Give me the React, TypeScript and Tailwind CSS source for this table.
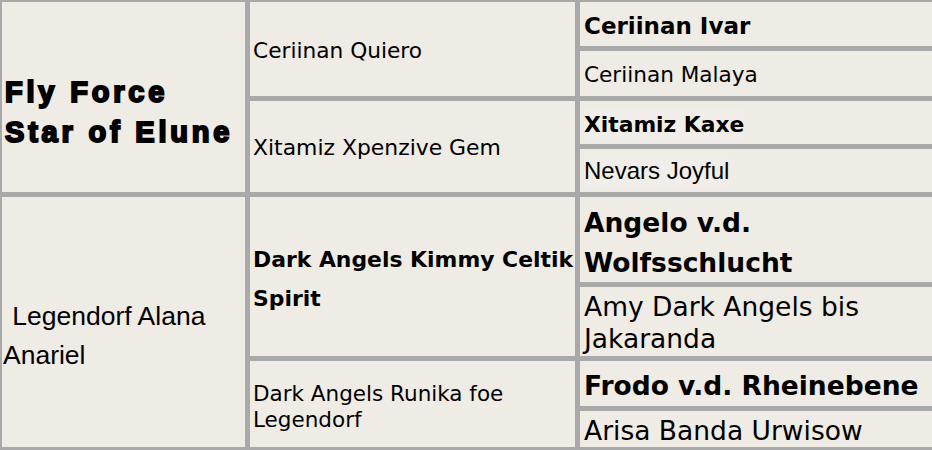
import React from "react";

const V = "font-['DejaVu_Sans',Verdana,sans-serif]";
const A = "font-['Liberation_Sans',Arial,sans-serif]";

function Cell({ className = "", children }: { className?: string; children: React.ReactNode }) {
  return (
    <div className={`bg-[#efebe5] flex flex-col justify-center text-black overflow-hidden ${className}`}>
      {children}
    </div>
  );
}

export default function App() {
  return (
    <div className="w-[932px] h-[450px] overflow-hidden bg-[#a9a9a9] pt-[2px] pl-[2px] pb-[3px]">
      <div className="grid grid-cols-[243px_325px_352px] grid-rows-[44px_45px_43px_43px_85px_69px_45px_36px] gap-[5px]">
        <Cell className="row-span-4 pl-[3px] pt-[30px]">
          <div
            className={`${A} font-bold text-[29px] leading-[40px] tracking-[3.8px] whitespace-nowrap [-webkit-text-stroke:2px_black]`}
          >
            Fly Force
            <br />
            Star of Elune
          </div>
        </Cell>
        <Cell className="row-span-2 pl-[3px] pt-[4px]">
          <div className={`${V} text-[21.7px] whitespace-nowrap`}>Ceriinan Quiero</div>
        </Cell>
        <Cell className="pl-[4px] pt-[4px]">
          <div className={`${V} font-bold text-[23px] whitespace-nowrap`}>Ceriinan Ivar</div>
        </Cell>
        <Cell className="pl-[4px] pt-[4px]">
          <div className={`${V} text-[21.6px] whitespace-nowrap`}>Ceriinan Malaya</div>
        </Cell>
        <Cell className="row-span-2 pl-[3px] pt-[3px]">
          <div className={`${V} text-[21.9px] whitespace-nowrap`}>Xitamiz Xpenzive Gem</div>
        </Cell>
        <Cell className="pl-[4px] items-start pt-[5px]">
          <span className={`${V} font-bold text-[21.8px] whitespace-nowrap bg-[#f1eee9]`}>Xitamiz Kaxe</span>
        </Cell>
        <Cell className="pl-[4px] items-start">
          <span className={`${A} text-[24px] whitespace-nowrap bg-[#f1eee9]`}>Nevars Joyful</span>
        </Cell>

        <Cell className="row-span-4 pl-[1px] pt-[28px]">
          <div className={`${A} text-[26.5px] leading-[39px] whitespace-nowrap`}>
            <span className="ml-[2px]">{"\u00a0Legendorf Alana"}</span>
            <br />
            Anariel
          </div>
        </Cell>
        <Cell className="row-span-2 pl-[3px] pt-[4px]">
          <div className={`${V} font-bold text-[21.9px] leading-[39px] whitespace-nowrap`}>
            Dark Angels Kimmy Celtik
            <br />
            Spirit
          </div>
        </Cell>
        <Cell className="pl-[4px] pt-[7px]">
          <div className={`${V} font-bold text-[26.5px] leading-[40px] whitespace-nowrap`}>
            Angelo v.d.
            <br />
            Wolfsschlucht
          </div>
        </Cell>
        <Cell className="pl-[4px] pt-[2px]">
          <div className={`${V} text-[26.5px] leading-[32px] whitespace-nowrap`}>
            Amy Dark Angels bis
            <br />
            Jakaranda
          </div>
        </Cell>
        <Cell className="row-span-2 pl-[3px] pt-[6px]">
          <div className={`${V} text-[21.5px] leading-[26px] whitespace-nowrap`}>
            Dark Angels Runika foe
            <br />
            Legendorf
          </div>
        </Cell>
        <Cell className="pl-[4px] pt-[4px]">
          <div className={`${V} font-bold text-[26.5px] whitespace-nowrap`}>Frodo v.d. Rheinebene</div>
        </Cell>
        <Cell className="pl-[4px] pt-[4px]">
          <div className={`${V} text-[26.5px] whitespace-nowrap`}>Arisa Banda Urwisow</div>
        </Cell>
      </div>
    </div>
  );
}
